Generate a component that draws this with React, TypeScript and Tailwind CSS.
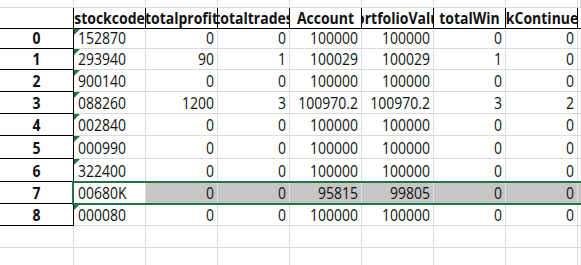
import React from "react";

// ── Sheet data ────────────────────────────────────────────────
const HEADERS = ["stockcode", "totalprofit", "totaltrades", "Account", "portfolioValue", "totalWin", "ckContinuet"];

const ROWS: (string | number)[][] = [
  ["152870", 0, 0, 100000, 100000, 0, 0],
  ["293940", 90, 1, 100029, 100029, 1, 0],
  ["900140", 0, 0, 100000, 100000, 0, 0],
  ["088260", 1200, 3, "100970.2", "100970.2", 3, 2],
  ["002840", 0, 0, 100000, 100000, 0, 0],
  ["000990", 0, 0, 100000, 100000, 0, 0],
  ["322400", 0, 0, 100000, 100000, 0, 0],
  ["00680K", 0, 0, 95815, 99805, 0, 0],
  ["000080", 0, 0, 100000, 100000, 0, 0],
];

// row heights as they land in the screenshot (incl. 1px bottom line)
const ROW_H = ["h-[20px]", "h-[21px]", "h-[22px]", "h-[22px]", "h-[22px]", "h-[23px]", "h-[23px]", "h-[22px]", "h-[22px]", "h-[22px]", "h-[22px]"];

const GRID = "grid grid-cols-[74px_72px_72px_72px_72px_72px_72px_72px_1fr]";
const SELECTED = 7;

const Triangle: React.FC = () => (
  <span className="absolute left-0 top-0 w-0 h-0 border-t-[6px] border-r-[6px] border-t-[#217346] border-r-transparent" />
);

const Sheet: React.FC = () => (
  <div className="relative w-[581px] h-[265px] overflow-hidden bg-white text-[14px] text-[#111]" style={{ fontFamily: '"Open Sans", "Noto Sans", sans-serif' }}>
    {/* top strip */}
    <div className={`${GRID} h-[8px]`}>
      {Array.from({ length: 9 }).map((_, i) => (
        <div key={i} className="border-r border-b border-[#d9d9d9]" />
      ))}
    </div>

    {/* header row */}
    <div className={`${GRID} h-[21px]`}>
      <div className="border-r border-b border-black" />
      {HEADERS.map((h) => (
        <div key={h} className="flex items-end justify-center overflow-hidden whitespace-nowrap border-r border-b border-black font-bold leading-none pb-[3px]">
          <span className="scale-y-115">{h}</span>
        </div>
      ))}
      <div className="border-b border-black" />
    </div>

    {/* data rows */}
    {ROW_H.map((hc, r) => {
      const row = ROWS[r];
      const sel = r === SELECTED;
      return (
        <div key={r} className={`${GRID} ${hc}`}>
          <div className={`flex items-end justify-center pb-[3px] font-bold leading-none border-r border-b ${row ? "border-black" : "border-[#d9d9d9]"}`}>
            {row && <span className="scale-y-115">{r}</span>}
          </div>
          {Array.from({ length: 8 }).map((_, c) => {
            const v = row ? row[c] : undefined;
            const first = c === 0;
            return (
              <div
                key={c}
                className={`relative flex items-end overflow-hidden whitespace-nowrap leading-none pb-[3px] border-r border-b border-[#d9d9d9] ${
                  first ? "justify-start pl-[4px]" : "justify-end pr-[3px]"
                } ${sel && !first ? "bg-[#c6c6c6] border-r-[#dadada]" : ""}`}
              >
                {first && row && !sel && <Triangle />}
                {v !== undefined && <span className="scale-y-115">{v}</span>}
              </div>
            );
          })}
        </div>
      );
    })}

    {/* selection frame over row 7 */}
    <div className="absolute left-[72px] top-[181px] w-[520px] h-[24px] border-2 border-[#217346] pointer-events-none" />
  </div>
);

const App: React.FC = () => <Sheet />;

export default App;
